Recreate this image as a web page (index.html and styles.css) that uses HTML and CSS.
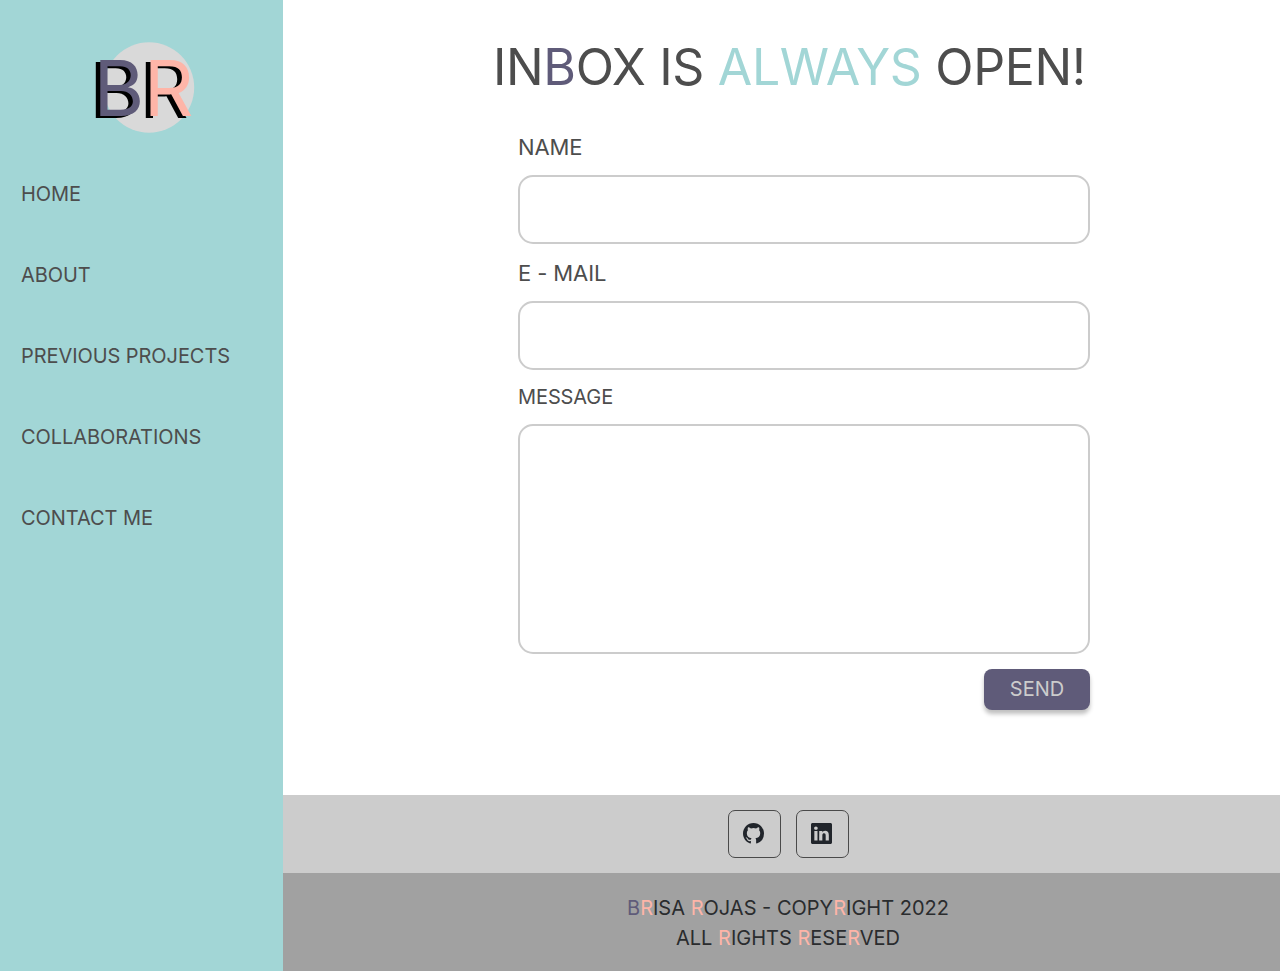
FILE: index.html
```html
<!DOCTYPE html>
<html lang="en">
<head>
<meta charset="utf-8">
<title>Contact - Brisa Rojas</title>
<link rel="stylesheet" href="styles.css">
</head>
<body>
<div class="layout">
  <aside class="sidebar">
    <svg class="logo" width="100" height="92" viewBox="0 0 100 92" role="img" aria-label="BR">
      <circle cx="55" cy="45.500" r="45.200" fill="#d9d9d9"/>
      <text class="mono" y="76" fill="#000"><tspan x="-5">B</tspan><tspan x="45">R</tspan></text>
      <text class="mono" y="74"><tspan x="-0.500" fill="#5f5b79">B</tspan><tspan x="49.700" fill="#feb5a8">R</tspan></text>
    </svg>
    <nav class="menu">
      <a>HOME</a>
      <a>ABOUT</a>
      <a>PREVIOUS PROJECTS</a>
      <a>COLLABORATIONS</a>
      <a>CONTACT ME</a>
    </nav>
  </aside>
  <div class="page">
    <main class="content">
      <h1 class="title">IN<span class="purple">B</span>OX IS <span class="aqua">ALWAYS</span> OPEN!</h1>
      <form class="form">
        <label class="label" for="name">NAME</label>
        <input class="field" id="name">
        <label class="label" for="mail">E - MAIL</label>
        <input class="field" id="mail">
        <label class="label label-small" for="message">MESSAGE</label>
        <textarea class="field field-tall" id="message"></textarea>
        <button class="send" type="button">SEND</button>
      </form>
    </main>
    <footer>
      <div class="social">
        <a class="social-link"><svg class="icon" width="21" height="21" viewBox="0 0 16 16"><path fill="#21252b" d="M8 0C3.58 0 0 3.58 0 8c0 3.54 2.29 6.53 5.47 7.59.4.07.55-.17.55-.38 0-.19-.01-.82-.01-1.49-2.01.37-2.53-.49-2.69-.94-.09-.23-.48-.94-.82-1.13-.28-.15-.68-.52-.01-.53.63-.01 1.08.58 1.23.82.72 1.21 1.87.87 2.33.66.07-.52.28-.87.51-1.07-1.78-.2-3.64-.89-3.64-3.95 0-.87.31-1.59.82-2.15-.08-.2-.36-1.02.08-2.12 0 0 .67-.21 2.2.82a7.6 7.6 0 0 1 4 0c1.53-1.04 2.2-.82 2.2-.82.44 1.1.16 1.92.08 2.12.51.56.82 1.27.82 2.15 0 3.07-1.87 3.75-3.65 3.95.29.25.54.73.54 1.48 0 1.07-.01 1.93-.01 2.2 0 .21.15.46.55.38A8.01 8.01 0 0 0 16 8c0-4.42-3.58-8-8-8z"/></svg></a>
        <a class="social-link"><svg class="icon" width="21" height="21" viewBox="0 0 16 16"><path fill="#21252b" d="M0 1.146C0 .513.526 0 1.175 0h13.65C15.474 0 16 .513 16 1.146v13.708c0 .633-.526 1.146-1.175 1.146H1.175C.526 16 0 15.487 0 14.854V1.146zm4.943 12.248V6.169H2.542v7.225h2.401zm-1.200-8.212c.837 0 1.358-.554 1.358-1.248-.015-.709-.520-1.248-1.342-1.248-.822 0-1.359.540-1.359 1.248 0 .694.521 1.248 1.327 1.248h.016zm4.908 8.212V9.359c0-.216.016-.432.080-.586.173-.431.568-.878 1.232-.878.869 0 1.216.662 1.216 1.634v3.865h2.401V9.250c0-2.220-1.184-3.252-2.764-3.252-1.274 0-1.845.700-2.165 1.193v.025h-.016l.016-.025V6.169h-2.400c.030.678 0 7.225 0 7.225h2.400z"/></svg></a>
      </div>
      <p class="copyright"><span class="purple">B</span><span class="pink">R</span>ISA <span class="pink">R</span>OJAS - COPY<span class="pink">R</span>IGHT 2022<br>ALL <span class="pink">R</span>IGHTS <span class="pink">R</span>ESE<span class="pink">R</span>VED</p>
    </footer>
  </div>
</div>
</body>
</html>
```
FILE: styles.css
```css
* { box-sizing: border-box; }
body { margin: 0; font-family: Inter, "Liberation Sans", sans-serif; font-weight: 400; color: #4d4d4d; }
.layout { display: flex; height: 971px; }
.sidebar { width: 283px; flex: none; background: #a2d6d6; padding: 42px 21px 0; }
.logo { display: block; margin-left: 73px; overflow: visible; }
.mono { font-size: 77.5px; }
.menu { display: flex; flex-direction: column; gap: 51px; margin-top: 45px; font-size: 20px; letter-spacing: -0.07px; line-height: 30px; }
.page { flex: 1; display: flex; flex-direction: column; background: #fff; }
.content { flex: 1; }
.title { margin: 37px 0 0 210px; font-size: 50px; font-weight: 400; letter-spacing: -0.37px; line-height: 60px; white-space: nowrap; }
.purple { color: #5f5b79; }
.aqua { color: #a2d6d6; }
.pink { color: #feb5a8; }
.form { display: flex; flex-direction: column; width: 572px; margin: 35px 0 0 235px; }
.label { font-size: 22px; letter-spacing: -0.1px; line-height: 30px; margin-bottom: 13px; }
.label-small { font-size: 20px; line-height: 26px; margin-bottom: 14px; }
.field { height: 69px; border: 2px solid #ccc; border-radius: 15px; background: #fff; margin: 0 0 14px; resize: none; }
.field-tall { height: 230px; margin-bottom: 15px; }
.send { align-self: flex-end; width: 106px; height: 41px; padding: 0 0 1px; border: 0; border-radius: 8px; background: #5f5b79; color: #ccc; font: 400 20px Inter, sans-serif; box-shadow: 0 4px 4px rgba(0,0,0,.25); }
.social { display: flex; gap: 15px; height: 78px; background: #ccc; padding: 15px 0 0 445px; }
.social-link { width: 53px; height: 48px; border: 1px solid #4a4a4a; border-radius: 7px; display: flex; align-items: center; justify-content: center; }
.icon { margin: 0 2px 2px 0; }
.copyright { margin: 0; height: 98px; padding: 20px 0 0 13px; background: #a1a1a1; color: #2a2c2e; text-align: center; font-size: 20px; line-height: 30px; }
```
